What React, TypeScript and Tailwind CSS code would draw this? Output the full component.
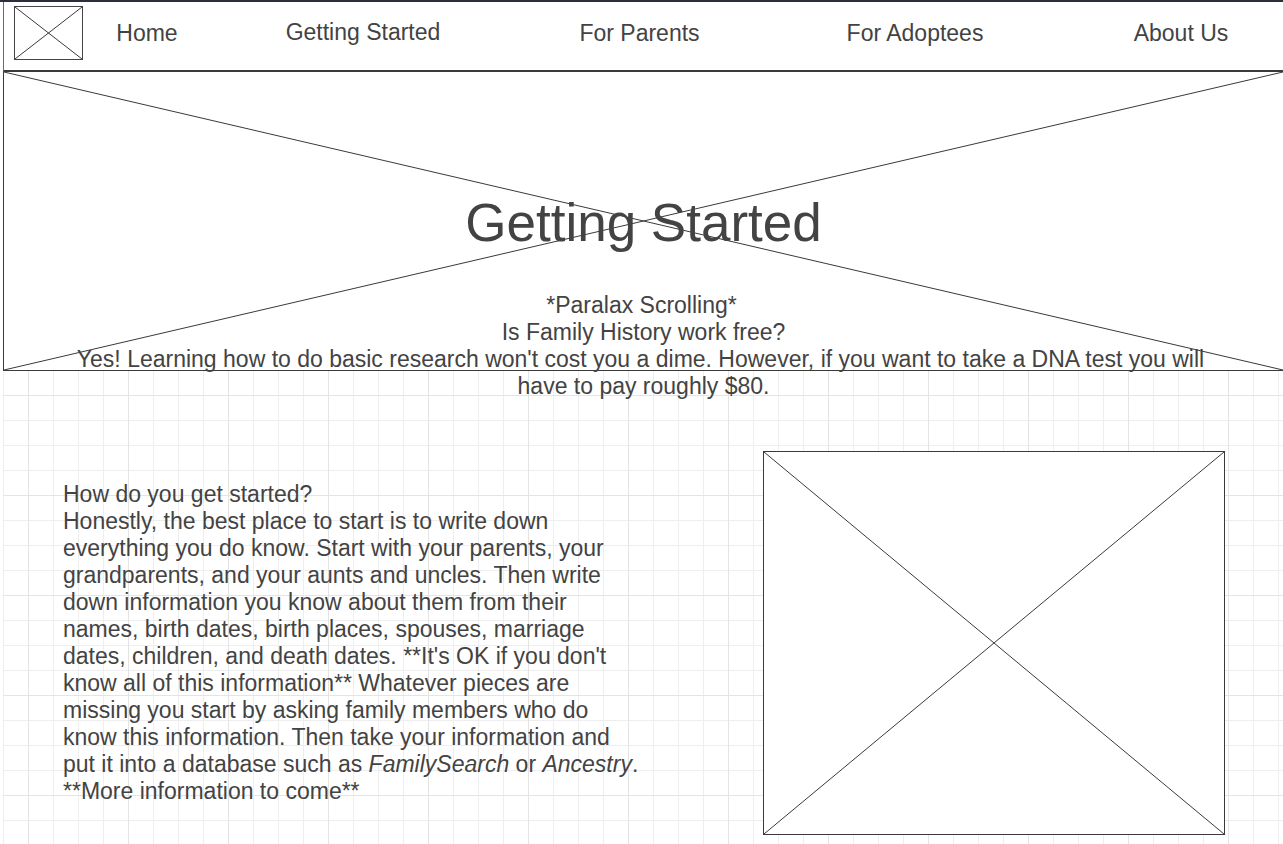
const font = "font-['Liberation_Sans',Arial,sans-serif]";

function Cross({ className }: { className?: string }) {
  // wireframe "image placeholder" cross, stretched to its box
  return (
    <svg className={className} viewBox="0 0 100 100" preserveAspectRatio="none">
      <line x1="0" y1="0" x2="100" y2="100" stroke="#3a3a3a" strokeWidth="1" vectorEffect="non-scaling-stroke" />
      <line x1="100" y1="0" x2="0" y2="100" stroke="#3a3a3a" strokeWidth="1" vectorEffect="non-scaling-stroke" />
    </svg>
  );
}

const navItems = [
  { label: "Home", w: "w-[130px]", mt: "mt-[17px]" },
  { label: "Getting Started", w: "w-[302px]", mt: "mt-[16px]" },
  { label: "For Parents", w: "w-[251px]", mt: "mt-[17px]" },
  { label: "For Adoptees", w: "w-[300px]", mt: "mt-[17px]" },
  { label: "About Us", w: "w-[232px]", mt: "mt-[17px]" },
];

const storyLines = [
  "Honestly, the best place to start is to write down",
  "everything you do know. Start with your parents, your",
  "grandparents, and your aunts and uncles. Then write",
  "down information you know about them from their",
  "names, birth dates, birth places, spouses, marriage",
  "dates, children, and death dates. **It's OK if you don't",
  "know all of this information** Whatever pieces are",
  "missing you start by asking family members who do",
  "know this information. Then take your information and",
];

export default function App() {
  return (
    <div className={`${font} text-[#434343] bg-white min-h-[844px] overflow-hidden`}>
      {/* top strip */}
      <div className="h-[2px] bg-[#2a2f38]" />

      {/* Header */}
      <header className="ml-[3px] h-[70px] border-l border-[#6b6b6b] border-b-2 border-b-[#3a3a3a] flex items-start overflow-hidden">
        <div className="ml-[10px] mr-[-1px] mt-[4px] w-[69px] h-[54px] border border-[#444] shrink-0 relative">
          <Cross className="absolute inset-0 w-full h-full" />
        </div>
        {navItems.map((n) => (
          <a key={n.label} href="#" className={`${n.w} ${n.mt} shrink-0 text-center text-[23px] leading-[28px]`}>
            {n.label}
          </a>
        ))}
      </header>

      {/* Hero */}
      <section className="relative ml-[3px] h-[299px] border-l border-b border-[#3a3a3a] z-10">
        <Cross className="absolute inset-0 w-full h-full" />
        <div className="relative flex flex-col items-center pt-[120px]">
          <h1 className="text-[53px] leading-[61px] font-normal">Getting Started</h1>
          <div className="mt-[39px] w-[1150px] text-center text-[23px] leading-[27px]">
            <p className="-ml-[4px]">*Paralax Scrolling*</p>
            <p>Is Family History work free?</p>
            <p className="-ml-[6px]">
              Yes! Learning how to do basic research won't cost you a dime. However, if you want to take a DNA test you will
            </p>
            <p>have to pay roughly $80.</p>
          </div>
        </div>
      </section>

      {/* Content on grid */}
      <section className="ml-[3px] min-h-[473px] flex items-start bg-[linear-gradient(to_right,#e4e4e4_1px,transparent_1px),linear-gradient(to_bottom,#e4e4e4_1px,transparent_1px),linear-gradient(to_right,#eeeeee_1px,transparent_1px),linear-gradient(to_bottom,#eeeeee_1px,transparent_1px)] [background-size:100px_100px,100px_100px,25px_25px,25px_25px] [background-position:25px_24px,25px_24px,0_24px,0_24px]">
        <div className="ml-[60px] mt-[110px] w-[620px] text-[23px] leading-[27px] whitespace-nowrap">
          <p>How do you get started?</p>
          {storyLines.map((l) => (
            <p key={l}>{l}</p>
          ))}
          <p>
            put it into a database such as <i>FamilySearch</i> or <i>Ancestry</i>.
          </p>
          <p>**More information to come**</p>
        </div>
        <div className="ml-auto mr-[58px] mt-[80px] w-[462px] h-[384px] border border-[#3a3a3a] bg-white relative shrink-0">
          <Cross className="absolute inset-0 w-full h-full" />
        </div>
      </section>
    </div>
  );
}
